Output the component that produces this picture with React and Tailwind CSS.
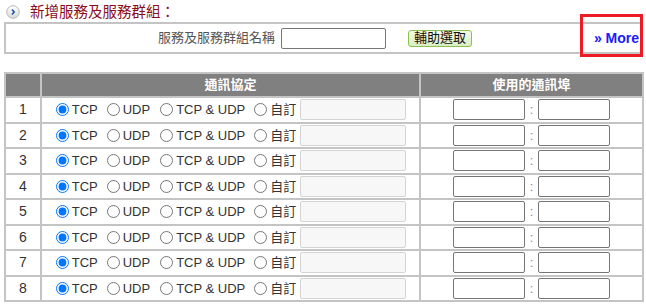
import React from "react";

const font = { fontFamily: '"Liberation Sans", Arial, "Noto Sans CJK TC", sans-serif' };

function Row({ n }) {
  return (
    <tr className="h-[25.5px]">
      <td className="border-2 border-[#c4c4c4] p-0 text-center text-[14px] text-[#333]">{n}</td>
      <td className="border-2 border-[#c4c4c4] p-0 text-center">
        <div className="flex items-center justify-center pl-[1px] text-[13px] text-[#333]">
          <label className="inline-flex items-center">
            <input type="radio" name={"p" + n} defaultChecked className="m-0 mr-[3px] h-[13px] w-[13px]" />
            <span>TCP</span>
          </label>
          <label className="ml-[9px] inline-flex items-center">
            <input type="radio" name={"p" + n} className="m-0 mr-[3px] h-[13px] w-[13px]" />
            <span>UDP</span>
          </label>
          <label className="ml-[10px] inline-flex items-center">
            <input type="radio" name={"p" + n} className="m-0 mr-[3px] h-[13px] w-[13px]" />
            <span>TCP &amp; UDP</span>
          </label>
          <label className="ml-[9px] inline-flex items-center">
            <input type="radio" name={"p" + n} className="m-0 mr-[3px] h-[13px] w-[13px]" />
            <span>自訂</span>
          </label>
          <input
            type="text"
            disabled
            className="ml-[4px] h-[21px] w-[106px] rounded-[2px] border border-[#d4d4d4] bg-[#f7f7f7]"
          />
        </div>
      </td>
      <td className="border-2 border-[#c4c4c4] p-0 text-center">
        <div className="flex items-center justify-center text-[13px] text-[#888]">
          <input type="text" className="h-[21px] w-[72px] rounded-[2px] border border-[#767676] bg-white" />
          <span className="mx-[5px]">:</span>
          <input type="text" className="h-[21px] w-[72px] rounded-[2px] border border-[#767676] bg-white" />
        </div>
      </td>
    </tr>
  );
}

export default function App() {
  return (
    <div className="h-[307px] w-[646px] overflow-hidden bg-white" style={font}>
      <div className="relative pl-[4px] pr-[5px]">
        <div className="flex h-[22px] items-center pt-[3px]">
          <svg width="14" height="14" viewBox="0 0 14 14" className="ml-[2px] -mt-[2px]">
            <defs>
              <linearGradient id="g" x1="0" y1="0" x2="0" y2="1">
                <stop offset="0" stopColor="#ffffff" />
                <stop offset="1" stopColor="#d8d8d8" />
              </linearGradient>
            </defs>
            <circle cx="7" cy="7" r="6.3" fill="url(#g)" stroke="#b8b8b8" strokeWidth="1" />
            <path d="M6 4.6 L8.2 7 L6 9.4" fill="none" stroke="#1d4f91" strokeWidth="1.5" />
          </svg>
          <span className="ml-[10px] text-[14.5px] text-[#8b0d1d]">新增服務及服務群組：</span>
        </div>
        <div className="flex h-[32px] items-center border-2 border-r-0 border-[#c4c4c4] text-[13px] text-[#555]">
          <span className="ml-[152px]">服務及服務群組名稱</span>
          <input type="text" className="ml-[6px] h-[21px] w-[105px] rounded-[2px] border border-[#767676] bg-white" />
          <button className="ml-[22px] h-[17px] rounded-[3px] border border-[#8cc152] bg-gradient-to-b from-[#f4fbe9] to-[#d9eec3] px-[5px] text-[13px] leading-[14px] text-[#111]">
            輔助選取
          </button>
          <span className="ml-auto mr-[2px] text-[14px] font-bold text-[#1a1aff]">»&nbsp;More</span>
        </div>
        <div className="absolute left-[580px] top-[14px] h-[43px] w-[63px] border-[3px] border-[#ed1c24]" />
      </div>

      <div className="mt-[18px] pl-[4px] pr-[2px]">
        <table className="w-[640px] border-collapse">
          <thead>
            <tr className="h-[24px] bg-[#808080] text-[13px] font-bold text-white">
              <th className="w-[36px] border-2 border-[#c4c4c4] p-0"></th>
              <th className="w-[379px] border-2 border-[#c4c4c4] p-0">通訊協定</th>
              <th className="border-2 border-[#c4c4c4] p-0">使用的通訊埠</th>
            </tr>
          </thead>
          <tbody>
            {[1, 2, 3, 4, 5, 6, 7, 8].map((n) => (
              <Row key={n} n={n} />
            ))}
          </tbody>
        </table>
      </div>
    </div>
  );
}
